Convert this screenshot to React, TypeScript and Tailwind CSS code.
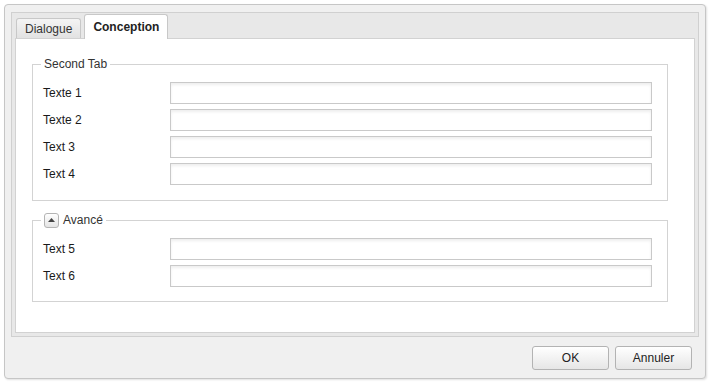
import React from "react";

function Field({ label }: { label: string }) {
  return (
    <div className="flex items-center h-[22px]">
      <div className="w-[127px] shrink-0 text-[#1a1a1a]">{label}</div>
      <div className="flex-1 h-[22px] border border-[#c9c9c9] bg-white shadow-[inset_0_2px_3px_rgba(0,0,0,0.07)]" />
    </div>
  );
}

export default function App() {
  return (
    <div className="w-[713px] h-[384px] bg-white pt-[4px] pl-[4px] pr-[7px] pb-[5px] font-['Liberation_Sans',Arial,sans-serif] text-[12px] text-[#1a1a1a]">
      <div className="h-full flex flex-col border border-[#c6c6c6] rounded-[4px] bg-[#f0f0f0] shadow-[1px_1px_2px_rgba(0,0,0,0.12)]">
        <div className="flex-1 mx-[6px] mt-[7px] border border-[#d0d0d0] bg-[#e8e8e8] flex flex-col px-[3px] pb-[3px]">
          <div className="h-[25px] flex items-end pl-[1px] gap-[3px]">
            <div className="h-[20px] px-[8px] flex items-center border border-b-0 border-[#c8c8c8] rounded-t-[3px] bg-gradient-to-b from-[#f4f4f4] to-[#e2e2e2] text-[#333]">
              Dialogue
            </div>
            <div className="relative z-10 -mb-[1px] h-[25px] px-[8px] flex items-center border border-b-0 border-[#c8c8c8] rounded-t-[3px] bg-white font-bold text-[#222]">
              Conception
            </div>
          </div>
          <div className="flex-1 bg-white border border-[#d2d2d2] pt-[17px] pl-[16px] pr-[26px]">
            <fieldset className="border border-[#d3d3d3] pl-[10px] pr-[15px] pt-[10px] pb-[15px]">
              <legend className="ml-[-2px] px-[3px] h-[16px] leading-[16px] text-[#333]">Second Tab</legend>
              <div className="flex flex-col gap-[5px]">
                <Field label="Texte 1" />
                <Field label="Texte 2" />
                <Field label="Text 3" />
                <Field label="Text 4" />
              </div>
            </fieldset>
            <fieldset className="mt-[11px] border border-[#d3d3d3] pl-[10px] pr-[15px] pt-[10px] pb-[14px]">
              <legend className="ml-[-2px] px-[3px] h-[16px] leading-[16px] text-[#333]">
                <span className="flex items-center gap-[4px]">
                  <span className="w-[15px] h-[15px] flex items-center justify-center border border-[#b4b4b4] rounded-[3px] bg-gradient-to-b from-white to-[#e4e4e4]">
                    <svg width="7" height="4" viewBox="0 0 7 4">
                      <polygon points="0,4 3.5,0 7,4" fill="#444" />
                    </svg>
                  </span>
                  <span>Avancé</span>
                </span>
              </legend>
              <div className="flex flex-col gap-[5px]">
                <Field label="Text 5" />
                <Field label="Text 6" />
              </div>
            </fieldset>
          </div>
        </div>
        <div className="h-[41px] flex items-center justify-end pr-[13px] gap-[6px]">
          <button className="w-[77px] h-[24px] border border-[#b3b3b3] rounded-[3px] bg-gradient-to-b from-white to-[#e6e6e6] text-[#222]">
            OK
          </button>
          <button className="w-[77px] h-[24px] border border-[#b3b3b3] rounded-[3px] bg-gradient-to-b from-white to-[#e6e6e6] text-[#222]">
            Annuler
          </button>
        </div>
      </div>
    </div>
  );
}
